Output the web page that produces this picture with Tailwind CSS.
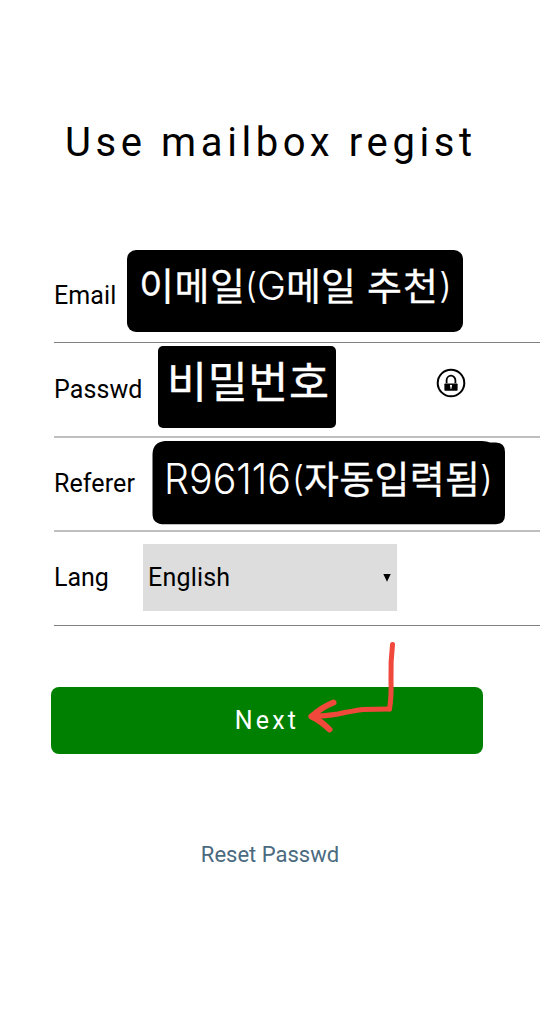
<!DOCTYPE html>
<html lang="en">
<head>
<meta charset="utf-8">
<title>Register</title>
<script src="https://cdn.jsdelivr.net/npm/@tailwindcss/browser@4"></script>
</head>
<body class="bg-white">
<main class="relative flex h-[1016px] w-[540px] flex-col overflow-hidden bg-white font-['Roboto','Noto_Sans_CJK_KR',sans-serif] text-[25px] text-black">
  <h1 class="mt-[113px] h-[60px] pl-[65px] text-[40px] leading-[60px] tracking-[4.6px] whitespace-nowrap">Use mailbox regist</h1>
  <form class="mt-[75px] ml-[54px] flex flex-col">
    <div class="flex h-[95px] items-start border-b border-[#808080]">
      <label class="w-[73px] pt-[32px] leading-[32px] tracking-[0.1px]">Email</label>
      <svg class="mt-[2px] h-[82px] w-[336px] shrink-0 rounded-[9px] bg-black" viewBox="127 250 336 82" fill="#fff" font-size="38">
        <g font-family="Noto Sans CJK KR, sans-serif" stroke="#fff" stroke-width=".3">
          <text x="139" y="300" textLength="106">이메일</text>
          <text x="286" y="300" textLength="70">메일</text>
          <text x="367" y="300" textLength="71">추천</text>
        </g>
        <g font-family="Inter, sans-serif" font-weight="300">
          <text x="245" y="297.500" font-size="35" textLength="12" lengthAdjust="spacingAndGlyphs">(</text>
          <text x="257" y="300" font-size="40" textLength="29" lengthAdjust="spacingAndGlyphs">G</text>
          <text x="439" y="297.500" font-size="35" textLength="13" lengthAdjust="spacingAndGlyphs">)</text>
        </g>
      </svg>
    </div>
    <div class="flex h-[95px] items-start border-b-2 border-[#bfbfbf]">
      <label class="w-[104px] pt-[31px] leading-[32px] tracking-[0.1px]">Passwd</label>
      <svg class="mt-[3px] h-[82px] w-[178px] shrink-0 rounded-[5px] bg-black" viewBox="158 346 178 82" fill="#fff" stroke="#fff" stroke-width=".4" font-size="43.5">
        <text x="167" y="397.500" textLength="162" font-family="Noto Sans CJK KR, sans-serif">비밀번호</text>
      </svg>
      <svg class="mt-[25px] ml-[100px] size-[30px] shrink-0" viewBox="0 0 30 30" fill="none" stroke="#000">
        <circle cx="15" cy="15" r="13.3" stroke-width="2"/>
        <path d="M10.600 15.300v-3a4.400 4.600 0 0 1 8.800 0V15.300" stroke-width="1.800"/>
        <rect x="8.400" y="15.500" width="13.200" height="7.200" rx=".8" fill="#000" stroke="none"/>
        <path d="M15 17.400v3.400" stroke="#fff" stroke-width="1.200"/>
        <circle cx="15" cy="17.800" r="1.100" fill="#fff" stroke="none"/>
      </svg>
    </div>
    <div class="flex h-[94px] items-start border-b-2 border-[#bfbfbf]">
      <label class="w-[98px] pt-[30px] leading-[32px] tracking-[0.1px]">Referer</label>
      <svg class="mt-[3px] h-[84px] w-[354px] shrink-0" viewBox="152 441 354 84" fill="#fff" font-size="38">
        <path fill="#000" d="M165 441H482Q487 441 490 442.6H496Q505 443 505 452V515Q505 524 496 524.3H165Q152.500 524.500 152.500 514V454Q153 442 165 441Z"/>
        <g font-family="Inter, sans-serif" font-weight="300">
          <text x="164" y="494" font-size="42" textLength="127" lengthAdjust="spacingAndGlyphs">R96116</text>
          <text x="292" y="491" font-size="35" textLength="12" lengthAdjust="spacingAndGlyphs">(</text>
          <text x="480" y="491" font-size="35" textLength="13" lengthAdjust="spacingAndGlyphs">)</text>
        </g>
        <text x="304" y="493" textLength="176" font-family="Noto Sans CJK KR, sans-serif" stroke="#fff" stroke-width=".3">자동입력됨</text>
      </svg>
    </div>
    <div class="flex h-[94px] items-start border-b border-[#808080]">
      <label class="w-[89px] pt-[30px] leading-[32px]">Lang</label>
      <div class="mt-[12px] flex h-[67px] w-[254px] items-center justify-between bg-[#ddd] pr-[6px] pl-[5px]">
        <span class="pt-px leading-[32px] tracking-[0.2px]">English</span>
        <svg class="h-[8px] w-[8px]" viewBox="0 0 8 8"><path d="M.3 0h7.400L4 7.800z"/></svg>
      </div>
    </div>
  </form>
  <button type="button" class="mt-[61px] ml-[51px] h-[67px] w-[432px] shrink-0 rounded-[8px] bg-[#008000] tracking-[3.2px] text-white">Next</button>
  <a class="mt-[86px] self-center text-[22px] leading-[30px] text-[#4a6a80]">Reset Passwd</a>
  <svg class="absolute top-[630px] left-[290px] h-[130px] w-[210px]" viewBox="0 0 210 130" fill="none" stroke="#f0483a" stroke-linecap="round" stroke-linejoin="round">
    <path d="M102.500 14.500Q100.500 32 101 50T99.500 79" stroke-width="5"/>
    <path d="M99.500 79Q86 79 73 79.500Q62 81 48 84Q36 86 21 86.500" stroke-width="5"/>
    <path d="M43.500 72.500Q32 77 21.500 86.500Q31 91 39.500 99.500" stroke-width="6"/>
  </svg>
</main>
</body>
</html>
